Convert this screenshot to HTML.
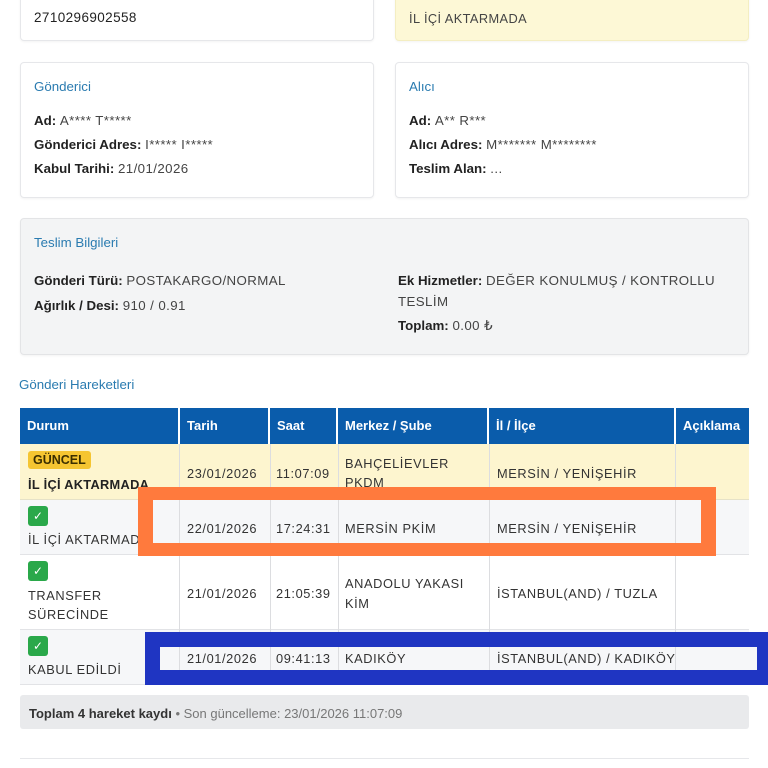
<!DOCTYPE html>
<html><head><meta charset="utf-8"><style>
*{margin:0;padding:0;box-sizing:border-box}
body{width:768px;height:768px;overflow:hidden;background:#fff;font-family:"Liberation Sans",sans-serif;color:#222;position:relative;font-size:13.3px}
.a{position:absolute;white-space:nowrap}
.card{position:absolute;background:#fff;border:1px solid #e6e7ea;border-radius:4px;box-shadow:0 1px 2px rgba(0,0,0,.05)}
.t{color:#2a7bb0;font-size:13.3px}
b{font-weight:bold;color:#222}
.v{color:#444;letter-spacing:.4px}
.h{position:absolute;top:408px;height:36px;background:#0a5cab;color:#fff;font-weight:bold;font-size:13px;line-height:36px;padding-left:7px;border-right:2px solid #fff}
.c{position:absolute;font-size:12.8px;color:#333;letter-spacing:.6px}
.vl{position:absolute;top:444px;height:241px;width:1px;background:#dcdde0}
.chk{position:absolute;width:20px;height:20px;background:#2aa84a;border-radius:3px;color:#fff;font-size:12px;text-align:center;line-height:20px}
</style></head><body>
<div class="card" style="left:20px;top:-5px;width:354px;height:46px"></div>
<div class="a" style="left:34px;top:10px;font-size:13.5px;letter-spacing:.4px">2710296902558</div>
<div class="card" style="left:395px;top:-5px;width:354px;height:46px;background:#fdf8d6;border-color:#f4eec2"></div>
<div class="a v" style="left:409px;top:11px;font-size:12.8px">İL İÇİ AKTARMADA</div>

<div class="card" style="left:20px;top:62px;width:354px;height:136px"></div>
<div class="a t" style="left:34px;top:79px">Gönderici</div>
<div class="a" style="left:34px;top:113px"><b>Ad:</b> <span class="v">A**** T*****</span></div>
<div class="a" style="left:34px;top:137px"><b>Gönderici Adres:</b> <span class="v">I***** I*****</span></div>
<div class="a" style="left:34px;top:161px"><b>Kabul Tarihi:</b> <span class="v">21/01/2026</span></div>

<div class="card" style="left:395px;top:62px;width:354px;height:136px"></div>
<div class="a t" style="left:409px;top:79px">Alıcı</div>
<div class="a" style="left:409px;top:113px"><b>Ad:</b> <span class="v">A** R***</span></div>
<div class="a" style="left:409px;top:137px"><b>Alıcı Adres:</b> <span class="v">M******* M********</span></div>
<div class="a" style="left:409px;top:161px"><b>Teslim Alan:</b> <span class="v">...</span></div>

<div class="card" style="left:20px;top:218px;width:729px;height:137px;background:#f3f4f5;border-color:#e3e4e6"></div>
<div class="a t" style="left:34px;top:235px">Teslim Bilgileri</div>
<div class="a" style="left:34px;top:273px"><b>Gönderi Türü:</b> <span class="v">POSTAKARGO/NORMAL</span></div>
<div class="a" style="left:34px;top:298px"><b>Ağırlık / Desi:</b> <span class="v">910 / 0.91</span></div>
<div class="a" style="left:398px;top:273px"><b>Ek Hizmetler:</b> <span class="v">DEĞER KONULMUŞ / KONTROLLU</span></div>
<div class="a v" style="left:398px;top:294px">TESLİM</div>
<div class="a" style="left:398px;top:318px"><b>Toplam:</b> <span class="v">0.00 ₺</span></div>

<div class="a t" style="left:19px;top:377px">Gönderi Hareketleri</div>

<div class="h" style="left:20px;width:160px">Durum</div>
<div class="h" style="left:180px;width:90px">Tarih</div>
<div class="h" style="left:270px;width:68px">Saat</div>
<div class="h" style="left:338px;width:151px">Merkez / Şube</div>
<div class="h" style="left:489px;width:187px">İl / İlçe</div>
<div class="h" style="left:676px;width:73px;border-right:0">Açıklama</div>

<div class="a" style="left:20px;top:444px;width:729px;height:56px;background:#fdf5cf;border-bottom:1px solid #e6e2c8"></div>
<div class="a" style="left:20px;top:500px;width:729px;height:55px;background:#f6f7f9;border-bottom:1px solid #e2e3e6"></div>
<div class="a" style="left:20px;top:555px;width:729px;height:75px;background:#fff;border-bottom:1px solid #e2e3e6"></div>
<div class="a" style="left:20px;top:630px;width:729px;height:55px;background:#f6f7f9;border-bottom:1px solid #e2e3e6"></div>
<div class="vl" style="left:179px"></div><div class="vl" style="left:270px"></div><div class="vl" style="left:338px"></div><div class="vl" style="left:489px"></div><div class="vl" style="left:675px"></div>

<div class="a" style="left:28px;top:451px;background:#f5c531;border-radius:3px;padding:2px 5px;font-weight:bold;font-size:12.5px;color:#3a2e00">GÜNCEL</div>
<div class="c" style="left:28px;top:477px;font-weight:bold;color:#222;letter-spacing:.3px">İL İÇİ AKTARMADA</div>
<div class="c" style="left:187px;top:466px">23/01/2026</div>
<div class="c" style="left:276px;top:466px">11:07:09</div>
<div class="c" style="left:345px;top:456px">BAHÇELİEVLER</div>
<div class="c" style="left:345px;top:475px">PKDM</div>
<div class="c" style="left:497px;top:466px">MERSİN / YENİŞEHİR</div>

<div class="chk" style="left:28px;top:506px">✓</div>
<div class="c" style="left:28px;top:532px">İL İÇİ AKTARMADA</div>
<div class="chk" style="left:28px;top:561px">✓</div>
<div class="c" style="left:28px;top:588px">TRANSFER</div>
<div class="c" style="left:28px;top:607px">SÜRECİNDE</div>
<div class="c" style="left:187px;top:586px">21/01/2026</div>
<div class="c" style="left:276px;top:586px">21:05:39</div>
<div class="c" style="left:345px;top:576px">ANADOLU YAKASI</div>
<div class="c" style="left:345px;top:596px">KİM</div>
<div class="c" style="left:497px;top:586px">İSTANBUL(AND) / TUZLA</div>
<div class="chk" style="left:28px;top:636px">✓</div>
<div class="c" style="left:28px;top:662px">KABUL EDİLDİ</div>

<div class="a" style="left:138px;top:487px;width:578px;height:69px;border:14px solid #ff7a3d;border-width:13px 15px 13px 15px;background:#f6f7f9"></div>
<div class="c" style="left:187px;top:521px">22/01/2026</div>
<div class="c" style="left:276px;top:521px">17:24:31</div>
<div class="c" style="left:345px;top:521px">MERSİN PKİM</div>
<div class="c" style="left:497px;top:521px">MERSİN / YENİŞEHİR</div>
<div class="a" style="left:270px;top:500px;width:1px;height:43px;background:#dcdde0"></div>
<div class="a" style="left:338px;top:500px;width:1px;height:43px;background:#dcdde0"></div>
<div class="a" style="left:489px;top:500px;width:1px;height:43px;background:#dcdde0"></div>
<div class="a" style="left:179px;top:500px;width:1px;height:43px;background:#dcdde0"></div>
<div class="a" style="left:675px;top:500px;width:1px;height:43px;background:#dcdde0"></div>

<div class="a" style="left:145px;top:632px;width:623px;height:53px;border:15px solid #1f35c2;border-width:15px 11px 15px 15px;background:#f6f7f9"></div>
<div class="c" style="left:187px;top:651px">21/01/2026</div>
<div class="c" style="left:276px;top:651px">09:41:13</div>
<div class="c" style="left:345px;top:651px">KADIKÖY</div>
<div class="c" style="left:497px;top:651px">İSTANBUL(AND) / KADIKÖY</div>
<div class="a" style="left:179px;top:647px;width:1px;height:23px;background:#dcdde0"></div>
<div class="a" style="left:270px;top:647px;width:1px;height:23px;background:#dcdde0"></div>
<div class="a" style="left:338px;top:647px;width:1px;height:23px;background:#dcdde0"></div>
<div class="a" style="left:489px;top:647px;width:1px;height:23px;background:#dcdde0"></div>
<div class="a" style="left:675px;top:647px;width:1px;height:23px;background:#dcdde0"></div>

<div class="a" style="left:20px;top:695px;width:729px;height:34px;background:#e9eaec;border-radius:3px"></div>
<div class="a" style="left:29px;top:706px;font-size:13px"><b style="color:#333">Toplam 4 hareket kaydı</b> <span style="color:#777">• Son güncelleme: 23/01/2026 11:07:09</span></div>
<div class="a" style="left:20px;top:758px;width:729px;height:1px;background:#e6e7ea"></div>
</body></html>
